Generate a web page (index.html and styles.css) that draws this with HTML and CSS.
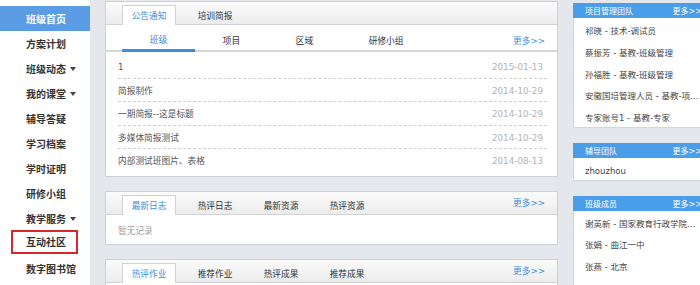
FILE: index.html
```html
<!DOCTYPE html>
<html lang="zh-CN">
<head>
<meta charset="utf-8">
<title>班级首页</title>
<link rel="stylesheet" href="styles.css">
</head>
<body>
<div class="page">
  <nav class="sidebar">
    <a class="nav-item active">班级首页</a>
    <a class="nav-item">方案计划</a>
    <a class="nav-item">班级动态<i class="caret"></i></a>
    <a class="nav-item">我的课堂<i class="caret"></i></a>
    <a class="nav-item">辅导答疑</a>
    <a class="nav-item">学习档案</a>
    <a class="nav-item">学时证明</a>
    <a class="nav-item">研修小组</a>
    <a class="nav-item">教学服务<i class="caret"></i></a>
    <a class="nav-item"><span class="mark">互动社区</span></a>
    <a class="nav-item">数字图书馆</a>
  </nav>

  <main class="main">
    <section class="panel">
      <div class="panel-head">
        <span class="tab active">公告通知</span>
        <span class="tab">培训简报</span>
      </div>
      <div class="subtabs">
        <span class="subtab active">班级</span>
        <span class="subtab">项目</span>
        <span class="subtab">区域</span>
        <span class="subtab">研修小组</span>
        <a class="more">更多&gt;&gt;</a>
      </div>
      <ul class="list">
        <li><span>1</span><span class="date">2015-01-13</span></li>
        <li><span>简报制作</span><span class="date">2014-10-29</span></li>
        <li><span>一期简报--这是标题</span><span class="date">2014-10-29</span></li>
        <li><span>多媒体简报测试</span><span class="date">2014-10-29</span></li>
        <li><span>内部测试班图片、表格</span><span class="date">2014-08-13</span></li>
      </ul>
    </section>

    <section class="panel">
      <div class="panel-head">
        <span class="tab active">最新日志</span>
        <span class="tab">热评日志</span>
        <span class="tab">最新资源</span>
        <span class="tab">热评资源</span>
        <a class="more head-more">更多&gt;&gt;</a>
      </div>
      <p class="empty">暂无记录</p>
    </section>

    <section class="panel">
      <div class="panel-head">
        <span class="tab active">热评作业</span>
        <span class="tab">推荐作业</span>
        <span class="tab">热评成果</span>
        <span class="tab">推荐成果</span>
        <a class="more head-more">更多&gt;&gt;</a>
      </div>
      <div class="panel-body"></div>
    </section>
  </main>

  <aside class="side">
    <section class="box">
      <div class="box-head"><span>项目管理团队</span><a>更多&gt;&gt;</a></div>
      <ul class="box-list">
        <li>祁晓 - 技术-调试员</li>
        <li>蔡振芳 - 基教-班级管理</li>
        <li>孙福胜 - 基教-班级管理</li>
        <li>安徽国培管理人员 - 基教-项目管理</li>
        <li>专家账号1 - 基教-专家</li>
      </ul>
    </section>
    <section class="box">
      <div class="box-head"><span>辅导团队</span><a>更多&gt;&gt;</a></div>
      <ul class="box-list">
        <li>zhouzhou</li>
      </ul>
    </section>
    <section class="box">
      <div class="box-head"><span>班级成员</span><a>更多&gt;&gt;</a></div>
      <ul class="box-list">
        <li>谢英新 - 国家教育行政学院基教</li>
        <li>张娟 - 曲江一中</li>
        <li>张燕 - 北京</li>
        <li>张琳 - 西安</li>
      </ul>
    </section>
  </aside>
</div>
</body>
</html>
```

FILE: styles.css
```css
html, body {
  margin: 0;
  padding: 0;
}
body {
  width: 700px;
  height: 285px;
  overflow: hidden;
  background: #e4e7eb;
  font-family: "DejaVu Sans", "Noto Sans CJK SC", sans-serif;
  font-size: 8.7px;
  color: #444;
}
ul, p {
  margin: 0;
  padding: 0;
  list-style: none;
}
a {
  text-decoration: none;
  cursor: pointer;
}

.page {
  display: flex;
  align-items: flex-start;
  gap: 15px;
  width: 711px;
}

/* ---------- sidebar ---------- */
.sidebar {
  flex: none;
  width: 90px;
  height: 285px;
  box-sizing: border-box;
  padding-top: 6px;
  background: #fff;
  display: flex;
  flex-direction: column;
}
.nav-item {
  display: flex;
  align-items: center;
  height: 25px;
  padding-left: 26px;
  font-family: "Noto Sans CJK SC", sans-serif;
  font-weight: bold;
  font-size: 10px;
  color: #333;
}
.nav-item.active {
  background: #5b9de4;
  color: #fff;
}
.caret {
  display: inline-block;
  margin-left: 4px;
  width: 0;
  height: 0;
  border-top: 4px solid #444;
  border-left: 3.5px solid transparent;
  border-right: 3.5px solid transparent;
}
.mark {
  display: inline-block;
  margin-left: -15px;
  margin-bottom: 4px;
  padding: 0 10px 0 13px;
  line-height: 20px;
  border: 2px solid #d8262c;
}

/* ---------- main column ---------- */
.main {
  flex: none;
  width: 453px;
  margin-top: 1px;
  display: flex;
  flex-direction: column;
  gap: 14px;
}
.panel {
  background: #fff;
  border: 1px solid #cdd1d5;
}
.panel-head {
  height: 22px;
  display: flex;
  align-items: flex-end;
  gap: 12px;
  padding-left: 16px;
  background: linear-gradient(#fbfbfb, #ececec);
  border-bottom: 1px solid #d2d2d2;
}
.tab {
  box-sizing: border-box;
  width: 54px;
  height: 20px;
  margin-bottom: -1px;
  line-height: 20px;
  text-align: center;
  color: #333;
  font-family: "Noto Sans CJK SC", sans-serif;
  border: 1px solid transparent;
  border-bottom: none;
}
.tab.active {
  background: #fff;
  border-color: #d2d2d2;
  color: #3a8fdb;
}
.more {
  color: #3a8fdb;
}
.head-more {
  margin-left: auto;
  align-self: center;
  padding-right: 12px;
}

.subtabs {
  display: flex;
  height: 25px;
  padding-left: 16px;
  padding-right: 12px;
  border-bottom: 2px solid #d6d6d6;
}
.subtab {
  box-sizing: border-box;
  display: flex;
  align-items: center;
  padding: 5px 27.8px 0;
  color: #333;
  font-family: "Noto Sans CJK SC", sans-serif;
}
.subtab.active {
  color: #2f8ad8;
  border-bottom: 3px solid #3a8fdb;
  margin-bottom: -2px;
}
.subtabs .more {
  margin-left: auto;
  display: flex;
  align-items: center;
  padding-top: 5px;
}

.list {
  padding: 3px 10px 3px 12px;
}
.list li {
  box-sizing: border-box;
  display: flex;
  justify-content: space-between;
  height: 23.6px;
  padding-top: 3px;
  line-height: 19.6px;
  padding-right: 4px;
  color: #555;
  border-bottom: 1px dashed #cfcfcf;
}
.list li:last-child {
  border-bottom: none;
}
.date {
  color: #b3b3b3;
  font-size: 8.8px;
}
.empty {
  height: 29px;
  box-sizing: border-box;
  padding: 3px 0 0 12px;
  line-height: 26px;
  color: #a0a0a0;
}
.panel-body {
  height: 20px;
}

/* ---------- right column ---------- */
.side {
  flex: none;
  width: 138px;
  padding-top: 3px;
  display: flex;
  flex-direction: column;
  gap: 15px;
}
.box {
  background: #fff;
  border: 1px solid #d3d6da;
}
.box-head {
  height: 15px;
  margin: -1px -1px 0;
  padding: 0 9px 0 12px;
  display: flex;
  justify-content: space-between;
  align-items: center;
  background: #4a9de8;
  color: #fff;
  font-size: 8px;
}
.box-list li {
  box-sizing: border-box;
  height: 21.75px;
  padding: 6px 10px 0 11px;
  line-height: 15.75px;
  white-space: nowrap;
  overflow: hidden;
  text-overflow: ellipsis;
  font-size: 8.5px;
  color: #444;
}
```
